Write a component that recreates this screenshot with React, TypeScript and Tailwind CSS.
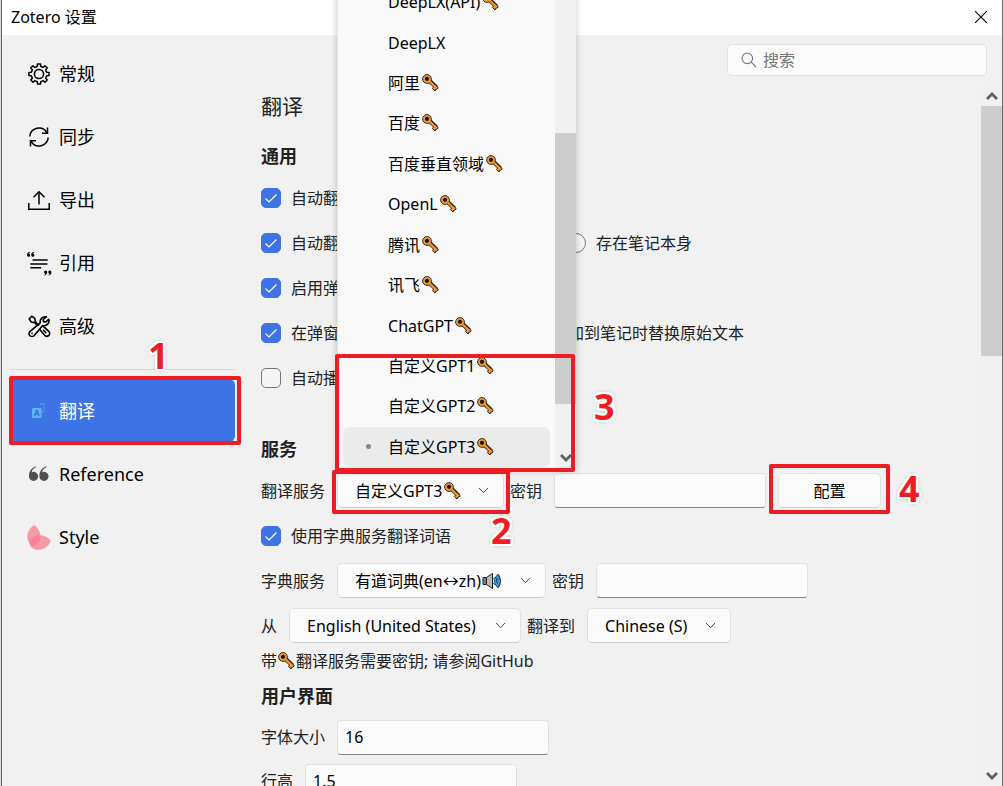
import React from 'react';
import clsx from 'clsx';

type IconProps = { className?: string };

// Eight teeth around a ring, built once
const gearPath = Array.from({ length: 8 }, (_, i) => {
    const at = (deg: number, r: number) => {
        const a = ((i * 45 + deg - 90) * Math.PI) / 180;
        return `${(13 + r * Math.cos(a)).toFixed(2)} ${(13 + r * Math.sin(a)).toFixed(2)}`;
    };
    return `${i === 0 ? 'M' : 'L'}${at(-12, 8)} L${at(-9, 10.2)} L${at(9, 10.2)} L${at(12, 8)} Q${at(22, 7.4)} ${at(33, 8)}`;
}).join(' ') + ' Z';

const GearIcon = () => (
    <svg viewBox="0 0 26 26" className="size-[26px]" fill="none" stroke="currentColor" strokeWidth="1.5" strokeLinejoin="round">
        <path d={gearPath} />
        <circle cx="13" cy="13" r="4.6" />
    </svg>
);

const SyncIcon = () => (
    <svg viewBox="0 0 26 26" className="size-[26px]" fill="none" stroke="currentColor" strokeWidth="1.5">
        <path d="M3.8 12.5A9.2 9.2 0 0 1 20.9 8.6" />
        <path d="M21.5 3.5V9.2H16" />
        <path d="M22.2 13.5A9.2 9.2 0 0 1 5.1 17.4" />
        <path d="M4.5 22.5V16.8H10" />
    </svg>
);

const ExportIcon = () => (
    <svg viewBox="0 0 26 26" className="size-[26px]" fill="none" stroke="currentColor" strokeWidth="1.5">
        <path d="M2.8 16V22.2H23.2V16" />
        <path d="M13 17.5V5" />
        <path d="M7.5 10.3L13 4.8L18.5 10.3" />
    </svg>
);

const CiteIcon = () => (
    <svg viewBox="0 0 26 26" className="size-[26px]" fill="currentColor">
        <path d="M3.8 1.8C1.8 2.4 1 3.6 1 5.1A1.6 1.6 0 1 0 2.7 3.6C2.8 3 3.2 2.7 4 2.4Z" />
        <path d="M8 1.8C6 2.4 5.2 3.6 5.2 5.1A1.6 1.6 0 1 0 6.9 3.6C7 3 7.4 2.7 8.2 2.4Z" />
        <path d="M6.5 9.2H21.7V10.7H6.5ZM4.3 13.2H21.4V14.7H4.3ZM4.3 17H15.2V18.5H4.3Z" />
        <path d="M18.4 25.6C20.4 25 21.2 23.8 21.2 22.3A1.6 1.6 0 1 0 19.5 23.8C19.4 24.4 19 24.7 18.2 25Z" />
        <path d="M22.6 25.6C24.6 25 25.4 23.8 25.4 22.3A1.6 1.6 0 1 0 23.7 23.8C23.6 24.4 23.2 24.7 22.4 25Z" />
    </svg>
);

const ToolsIcon = () => (
    <svg viewBox="0 0 26 26" className="size-[26px]" fill="none" stroke="currentColor" strokeWidth="1.6" strokeLinejoin="round" strokeLinecap="round">
        <path d="M12.6 12.2L9.4 8.8L8.8 5.4L5.8 3.2L3.2 5.8L5.2 9L8.6 9.6L11.2 12.4" />
        <path d="M14 16.8L18.8 22.4A2.8 2.8 0 0 0 22.8 18.4L17.4 13.4" />
        <path d="M17.6 17.4L19.8 19.6" />
        <path d="M20.4 3.9A5 5 0 0 0 14.2 9.8L3.9 18.6A2.8 2.8 0 1 0 8 22.7L16.7 12.5A5 5 0 0 0 22.8 6.2L19.8 9L17.4 8.6L17.2 6.4Z" />
        <path d="M6.1 20.4V20.6" />
    </svg>
);

const TranslateIcon = () => (
    <svg viewBox="0 0 26 26" className="size-[26px]">
        <path d="M14 6H20M18 6V14H12" fill="none" stroke="#5a9bf0" strokeWidth="1.4" strokeDasharray="2 1" />
        <rect x="6" y="10" width="9.5" height="10" rx="1" fill="#5fb2f5" />
        <text x="10.7" y="18" textAnchor="middle" fontSize="8" fontWeight="700" fill="#3269c9">A</text>
    </svg>
);

const QuoteIcon = () => (
    <svg viewBox="0 0 26 26" className="size-[26px]" fill="#505050">
        <path d="M10 5.4C5.6 6.6 3 10 3 14.9A4.6 4.6 0 1 0 5.6 11.2C6 9 7.4 7.2 10.2 6.2Z" />
        <path d="M20.4 5.4C16 6.6 13.4 10 13.4 14.9A4.6 4.6 0 1 0 16 11.2C16.4 9 17.8 7.2 20.6 6.2Z" />
    </svg>
);

const PetalIcon = () => (
    <svg viewBox="0 0 26 26" className="size-[26px]">
        <path d="M8 1C13 4.5 15.5 10 14 15C12.5 20 8 23 5 21C0.5 17.5 -1.5 8 8 1Z" fill="#f39aa6" />
        <path d="M25 16.5C22 24.5 14 27.5 8 25C3.5 23 2.5 18.5 5 15C9 9.5 19 10 25 16.5Z" fill="#f39aa6" />
        <path d="M14.3 11.5C15 16.5 12 20.5 8 21.8C4 22.5 2.3 18.5 5 15C7 12 10.5 11.2 14.3 11.5Z" fill="#ff7f96" />
    </svg>
);

const KeyIcon = ({ className }: IconProps) => (
    <svg viewBox="0 0 17 18" className={clsx('h-[18px] w-[17px] shrink-0', className)} strokeLinejoin="round">
        <path d="M7.2 6.6L14.6 13.5" stroke="#2b1d1a" strokeWidth="4.2" fill="none" />
        <path d="M13 10.6L16.3 13.8L14.6 15.2L14 14.9L13 17L10.3 14.4L11.7 13Z" fill="#ef9a2c" stroke="#2b1d1a" strokeWidth="1" />
        <circle cx="5" cy="5" r="4.4" fill="#ef9a2c" stroke="#2b1d1a" strokeWidth="0.9" />
        <path d="M7.6 7.2L14.3 14" stroke="#ef9a2c" strokeWidth="2.2" fill="none" />
        <circle cx="5" cy="4.8" r="2.1" fill="#161010" />
    </svg>
);

const SpeakerIcon = () => (
    <svg viewBox="0 0 19 18" className="ml-px h-[18px] w-[19px] shrink-0" strokeLinejoin="round">
        <path d="M1 5.5H4.5V12.5H1Z" fill="#7d7d7d" stroke="#222" strokeWidth="1" />
        <path d="M4.5 5.5L10.5 1.5V16.5L4.5 12.5Z" fill="#b9b9b9" stroke="#222" strokeWidth="1" />
        <path d="M12.3 5.5C14 7.5 14 10.5 12.3 12.5" fill="none" stroke="#12263a" strokeWidth="3" />
        <path d="M14.8 3C18 6 18 12 14.8 15" fill="none" stroke="#12263a" strokeWidth="3.4" />
        <path d="M12.3 5.8C14 7.5 14 10.5 12.3 12.2" fill="none" stroke="#2fa0e8" strokeWidth="1.8" />
        <path d="M14.8 3.4C17.8 6 17.8 12 14.8 14.6" fill="none" stroke="#2fa0e8" strokeWidth="2" />
    </svg>
);

const ChevronIcon = () => (
    <svg viewBox="0 0 11 11" className="pointer-events-none size-[11px] shrink-0" fill="none" stroke="#444" strokeWidth="1">
        <path d="M1 3L5.5 7.7L10 3" />
    </svg>
);

const ScrollArrow = ({ up = false }: { up?: boolean }) => (
    <span className="flex h-[21px] w-full items-center justify-center">
        <svg viewBox="0 0 12 10" className={clsx('h-[10px] w-[12px]', up && 'rotate-180')} fill="none" stroke="#606060" strokeWidth="2.8">
            <path d="M1 2L6 7L11 2" />
        </svg>
    </span>
);

interface NavItemProps {
    icon: React.ReactNode;
    label: string;
    active?: boolean;
}

const NavItem: React.FC<NavItemProps> = ({ icon, label, active = false }) => (
    <button
        type="button"
        className={clsx(
            'flex h-[63px] w-full items-center gap-[7px] rounded-md pl-4 text-left text-lg',
            active ? 'bg-[#3f74e6] text-white' : 'text-black'
        )}
    >
        {icon}
        {label}
    </button>
);

const CheckBox = ({ label, checked = true, className }: { label: string; checked?: boolean; className?: string }) => (
    <label className={clsx('flex shrink-0 items-center gap-[10px] whitespace-nowrap', className)}>
        <span className="relative size-5 shrink-0">
            <input
                type="checkbox"
                defaultChecked={checked}
                className="peer block size-5 appearance-none rounded-[5px] border border-[#777] bg-[#f5f5f5] checked:border-[#3f74e6] checked:bg-[#3f74e6]"
            />
            <svg viewBox="0 0 20 20" className="pointer-events-none absolute inset-0 hidden size-5 peer-checked:block" fill="none" stroke="#fff" strokeWidth="1.2">
                <path d="M4.5 10.5L8 14L15.5 6.5" />
            </svg>
        </span>
        {label}
    </label>
);

interface SelectFieldProps {
    id: string;
    value: string;
    width: string;
    icon?: React.ReactNode;
}

const SelectField: React.FC<SelectFieldProps> = ({ id, value, width, icon }) => (
    <div
        className={clsx(
            'flex h-[35px] shrink-0 items-center rounded-[5px] border border-[#e0e0e0] border-b-[#cacaca] bg-[#fbfbfb] pr-[14px] pl-[17px] text-black',
            width
        )}
    >
        <select id={id} className="field-sizing-content appearance-none bg-transparent outline-none">
            <option>{value}</option>
        </select>
        {icon}
        <span className="ml-auto flex"><ChevronIcon /></span>
    </div>
);

const TextField = ({ id, value = '' }: { id: string; value?: string }) => (
    <input
        id={id}
        type="text"
        defaultValue={value}
        className="h-[35px] w-[212px] rounded-[4px] border border-[#e2e2e2] border-b-[#858585] bg-[#fbfbfb] px-[7px] text-black outline-none"
    />
);

const SectionTitle = ({ children, className }: { children: React.ReactNode; className?: string }) => (
    <h2 className={clsx('flex h-[38px] items-center text-lg font-bold', className)}>{children}</h2>
);

const services = [
    { name: 'DeepLX(API)', key: true },
    { name: 'DeepLX', key: false },
    { name: '阿里', key: true },
    { name: '百度', key: true },
    { name: '百度垂直领域', key: true },
    { name: 'OpenL', key: true },
    { name: '腾讯', key: true },
    { name: '讯飞', key: true },
    { name: 'ChatGPT', key: true },
    { name: '自定义GPT1', key: true },
    { name: '自定义GPT2', key: true },
    { name: '自定义GPT3', key: true }
];

const ServiceMenu = () => (
    <div className="absolute bottom-full left-0 z-10 mb-0.5 flex w-[239px] border-l border-[#e4e4e4] bg-[#f9f9f9] text-black shadow-[0_0_7px_rgba(0,0,0,0.22)]">
        <ul role="listbox" aria-label="翻译服务" className="mb-1 flex h-[485px] flex-1 flex-col px-[5px]">
            {services.map(({ name, key }) => {
                const selected = name === '自定义GPT3';
                return (
                    <li
                        key={name}
                        role="option"
                        aria-selected={selected}
                        className={clsx('flex flex-1 items-center rounded-md', selected && 'bg-[#ebebeb]')}
                    >
                        <span className="flex w-[45px] shrink-0 justify-center pl-[6px]">
                            {selected && <span className="size-[5px] rounded-full bg-[#868686]" />}
                        </span>
                        {name}
                        {key && <KeyIcon className="ml-0.5" />}
                    </li>
                );
            })}
        </ul>
        <div className="flex w-[21px] flex-col justify-end bg-[#f0f0f0] pb-[3px]">
            <div className="mb-[43px] h-[271px] bg-[#cdcdcd]" />
            <ScrollArrow />
        </div>
    </div>
);

const Sidebar = () => (
    <nav className="w-[233px] shrink-0 pt-[7px] pl-2">
        <NavItem icon={<GearIcon />} label="常规" />
        <NavItem icon={<SyncIcon />} label="同步" />
        <NavItem icon={<ExportIcon />} label="导出" />
        <NavItem icon={<CiteIcon />} label="引用" />
        <NavItem icon={<ToolsIcon />} label="高级" />
        <hr className="mt-3 mb-[9px] border-[#d9d9d9]" />
        <NavItem icon={<TranslateIcon />} label="翻译" active />
        <NavItem icon={<QuoteIcon />} label="Reference" />
        <NavItem icon={<PetalIcon />} label="Style" />
    </nav>
);

const markStyle =
    'absolute text-4xl leading-9 font-bold text-[#ee1c24] [text-shadow:2px_0_#fff,-2px_0_#fff,0_2px_#fff,0_-2px_#fff,2px_2px_#fff,-2px_2px_#fff,2px_-2px_#fff,-2px_-2px_#fff,0_0_5px_#777]';
const frameStyle = 'absolute rounded-[2px] border-4 border-[#ee1c24]';

// Numbered walkthrough marks drawn over the window
const Annotations = () => (
    <div className="pointer-events-none absolute inset-0 z-20">
        <div className={clsx(frameStyle, 'top-[376px] left-[9px] h-[69px] w-[232px]')} />
        <div className={clsx(frameStyle, 'top-[354px] left-[335px] h-[118px] w-[240px]')} />
        <div className={clsx(frameStyle, 'top-[470px] left-[332px] h-[44px] w-[178px]')} />
        <div className={clsx(frameStyle, 'top-[464px] left-[769px] h-[50px] w-[121px]')} />
        <span className={clsx(markStyle, 'top-[338px] left-[148px]')}>1</span>
        <span className={clsx(markStyle, 'top-[513px] left-[491px]')}>2</span>
        <span className={clsx(markStyle, 'top-[389px] left-[594px]')}>3</span>
        <span className={clsx(markStyle, 'top-[471px] left-[899px]')}>4</span>
    </div>
);

const rowStyle = 'flex h-[45px] items-center whitespace-nowrap';

export default function App() {
    return (
        <div className="relative h-screen overflow-hidden bg-[#d8d8d8] pl-px font-['Noto_Sans','Noto_Sans_CJK_SC',sans-serif] text-base text-[#222]">
            <div className="flex h-full flex-col border-x border-[#6b6b6b] bg-[#f1f1f1]">
                <header className="flex h-[35px] shrink-0 items-center justify-between bg-white pr-[15px] pb-0.5 pl-[9px] text-black">
                    <span>Zotero 设置</span>
                    <button type="button" aria-label="关闭">
                        <svg viewBox="0 0 12 12" className="size-3" stroke="#000" strokeWidth="1.1">
                            <path d="M0 0L12 12M12 0L0 12" />
                        </svg>
                    </button>
                </header>

                <div className="flex min-h-0 flex-1">
                    <Sidebar />

                    <main className="flex min-w-0 flex-1 flex-col">
                        <div className="flex h-[50px] shrink-0 justify-end pt-[9px] pr-[15px]">
                            <label className="flex h-8 w-[260px] items-center gap-[6px] rounded-[4px] border border-[#e0e0e0] bg-[#fbfbfb] px-[13px]">
                                <svg viewBox="0 0 16 16" className="size-4 shrink-0" fill="none" stroke="#777" strokeWidth="1.1">
                                    <circle cx="6.3" cy="6.3" r="5.3" />
                                    <path d="M10.2 10.2L15 15" />
                                </svg>
                                <input type="text" aria-label="搜索" placeholder="搜索" className="min-w-0 flex-1 bg-transparent outline-none placeholder:text-[#757575]" />
                            </label>
                        </div>

                        <div className="flex min-h-0 flex-1">
                            <div className="min-w-0 flex-1 pl-[26px]">
                                <h1 className="flex h-[44px] items-center text-[21px]">翻译</h1>

                                <SectionTitle className="mt-2">通用</SectionTitle>
                                <div className={rowStyle}>
                                    <CheckBox label="自动翻译" />
                                </div>
                                <div className={rowStyle}>
                                    <CheckBox label="自动翻译" className="w-[305px]" />
                                    <label className="flex items-center gap-[10px]">
                                        <input type="radio" name="note" className="size-5 appearance-none rounded-full border border-[#777] bg-[#f5f5f5]" />
                                        存在笔记本身
                                    </label>
                                </div>
                                <div className={rowStyle}>
                                    <CheckBox label="启用弹窗" />
                                </div>
                                <div className={rowStyle}>
                                    <CheckBox label="在弹窗中" className="w-[261px]" />
                                    <CheckBox label="添加到笔记时替换原始文本" checked={false} />
                                </div>
                                <div className={rowStyle}>
                                    <CheckBox label="自动播放" checked={false} />
                                </div>

                                <SectionTitle className="mt-[30px]">服务</SectionTitle>
                                <div className={rowStyle}>
                                    <label htmlFor="service" className="mr-3">翻译服务</label>
                                    <div className="relative">
                                        <SelectField id="service" value="自定义GPT3" width="w-[167px]" icon={<KeyIcon className="ml-0.5" />} />
                                        <ServiceMenu />
                                    </div>
                                    <label htmlFor="service-key" className="mr-3 ml-1.5">密钥</label>
                                    <TextField id="service-key" />
                                    <button type="button" className="ml-3 h-[35px] w-[103px] rounded-[5px] border border-[#e4e4e4] border-b-[#cecece] bg-[#fbfbfb] text-black">
                                        配置
                                    </button>
                                </div>
                                <div className={rowStyle}>
                                    <CheckBox label="使用字典服务翻译词语" />
                                </div>
                                <div className={rowStyle}>
                                    <label htmlFor="dict" className="mr-3">字典服务</label>
                                    <SelectField id="dict" value="有道词典(en↔zh)" width="w-[209px]" icon={<SpeakerIcon />} />
                                    <label htmlFor="dict-key" className="mr-3 ml-1.5">密钥</label>
                                    <TextField id="dict-key" />
                                </div>
                                <div className={rowStyle}>
                                    <label htmlFor="from" className="mr-3">从</label>
                                    <SelectField id="from" value="English (United States)" width="w-[232px]" />
                                    <label htmlFor="to" className="mr-3 ml-1.5">翻译到</label>
                                    <SelectField id="to" value="Chinese (S)" width="w-[144px]" />
                                </div>
                                <p className="flex h-[26px] items-center whitespace-nowrap">
                                    带<KeyIcon className="mx-px" />翻译服务需要密钥; 请参阅GitHub
                                </p>

                                <SectionTitle className="mt-[3px]">用户界面</SectionTitle>
                                <div className="flex h-[44px] items-center">
                                    <label htmlFor="font-size" className="mr-3">字体大小</label>
                                    <TextField id="font-size" value="16" />
                                </div>
                                <div className="flex h-[44px] items-center">
                                    <label htmlFor="line-height" className="mr-3">行高</label>
                                    <TextField id="line-height" value="1.5" />
                                </div>
                            </div>

                            <div className="flex w-[21px] shrink-0 flex-col justify-between bg-[#f0f0f0]">
                                <div>
                                    <ScrollArrow up />
                                    <div className="h-[250px] bg-[#cdcdcd]" />
                                </div>
                                <ScrollArrow />
                            </div>
                        </div>
                    </main>
                </div>
            </div>
            <Annotations />
        </div>
    );
}
